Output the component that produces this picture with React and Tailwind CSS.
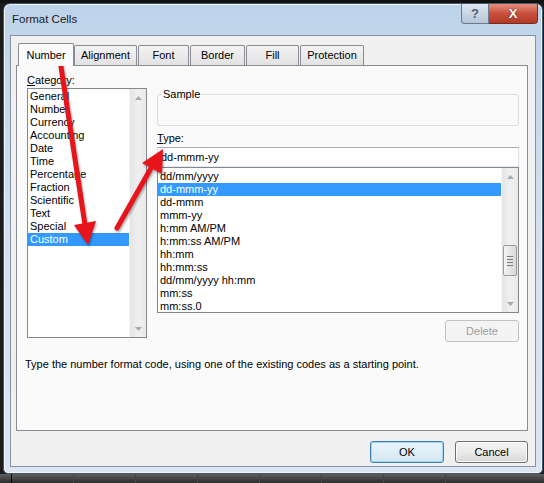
const categories = [
  "General",
  "Number",
  "Currency",
  "Accounting",
  "Date",
  "Time",
  "Percentage",
  "Fraction",
  "Scientific",
  "Text",
  "Special",
  "Custom",
];

const types = [
  "dd/mm/yyyy",
  "dd-mmm-yy",
  "dd-mmm",
  "mmm-yy",
  "h:mm AM/PM",
  "h:mm:ss AM/PM",
  "hh:mm",
  "hh:mm:ss",
  "dd/mm/yyyy hh:mm",
  "mm:ss",
  "mm:ss.0",
];

const tabs = [
  { label: "Alignment", w: "w-[63px]" },
  { label: "Font", w: "w-[51px]" },
  { label: "Border", w: "w-[55px]" },
  { label: "Fill", w: "w-[53px]" },
  { label: "Protection", w: "w-[64px]" },
];

function Arrow({ up }) {
  return (
    <svg width="7" height="4" viewBox="0 0 7 4">
      <path d={up ? "M0 4 L3.5 0 L7 4 Z" : "M0 0 L3.5 4 L7 0 Z"} fill="#a3abb5" />
    </svg>
  );
}

function ScrollBar({ thumb }) {
  return (
    <div className="w-[17px] h-full flex flex-col bg-gradient-to-r from-[#e4e4e4] via-[#f0f0f0] to-[#e9e9e9] border-l border-[#f6f6f6]">
      <div className="h-[17px] flex items-center justify-center">
        <Arrow up />
      </div>
      <div className="flex-1 flex flex-col">
        {thumb && (
          <>
            <div className="h-[60px]" />
            <div className="h-[31px] mx-[1px] rounded-[2px] border border-[#9b9b9b] bg-gradient-to-r from-[#f4f4f4] to-[#d9d9d9] flex flex-col items-center justify-center gap-[2px]">
              <div className="w-[6px] h-px bg-[#7a7a7a]" />
              <div className="w-[6px] h-px bg-[#7a7a7a]" />
              <div className="w-[6px] h-px bg-[#7a7a7a]" />
              <div className="w-[6px] h-px bg-[#7a7a7a]" />
            </div>
          </>
        )}
      </div>
      <div className="h-[17px] flex items-center justify-center">
        <Arrow />
      </div>
    </div>
  );
}

function Button({ children, primary, disabled, w }) {
  return (
    <div
      className={`${w} h-[22px] rounded-[3px] border flex items-center justify-center ${
        disabled
          ? "border-[#c2c2c2] bg-[#f4f4f4] text-[#9d9d9d]"
          : primary
          ? "border-[#3c7fb1] bg-gradient-to-b from-[#eaf6fd] to-[#d4e6f3] text-black shadow-[inset_0_0_0_1px_#9fd5f5]"
          : "border-[#707070] bg-gradient-to-b from-[#f2f2f2] via-[#ebebeb] to-[#d6d6d6] text-black shadow-[inset_0_0_0_1px_#fcfcfc]"
      }`}
    >
      {children}
    </div>
  );
}

export default function App() {
  return (
    <div
      className="w-[544px] h-[483px] bg-[#1c1c1c] relative overflow-hidden flex flex-col text-[11px] text-black"
      style={{ fontFamily: '"Liberation Sans", Arial, sans-serif' }}
    >
      <div className="h-[3px] bg-[#111]" />

      {/* WINDOW */}
      <div className="ml-[3px] w-[540px] h-[471px] rounded-t-[7px] rounded-b-[5px] border border-[#46566b] bg-gradient-to-b from-[#bed3ea] via-[#d3e1f0] to-[#dbe6f2] shadow-[inset_0_0_0_1px_#eef4fa] flex flex-col">
        {/* TITLE */}
        <div className="h-[31px] flex items-start">
          <div className="pl-[8px] h-[31px] flex items-center text-[11.5px] text-[#1b1b1b]">
            Format Cells
          </div>
          <div className="ml-auto mr-[4px] flex">
            <div className="w-[28px] h-[20px] rounded-bl-[4px] border border-[#6c7b8f] border-t-0 bg-gradient-to-b from-[#dfe7f1] to-[#b5c5d8] flex items-center justify-center text-[13px] font-bold text-[#4d5d72]">
              ?
            </div>
            <div className="w-[49px] h-[20px] rounded-br-[4px] border border-[#7a2a22] border-t-0 border-l-0 bg-gradient-to-b from-[#e3907f] via-[#c8503d] to-[#b13a26] flex items-center justify-center text-[13px] font-bold text-white [text-shadow:0_0_2px_#5a1a10]">
              X
            </div>
          </div>
        </div>

        {/* CLIENT */}
        <div className="ml-[6px] w-[526px] h-[432px] border border-[#8493a6] bg-[#f0f0f0] flex flex-col">
          <div className="pt-[7px] ml-[5px] w-[512px]">
            {/* TABS */}
            <div className="h-[22px] flex items-end pl-[2px]">
              <div className="relative z-10 w-[56px] h-[23px] -mb-px border border-b-0 border-[#898c95] rounded-t-[2px] bg-[#fafafa] flex items-center justify-center">
                Number
              </div>
              {tabs.map((t, i) => (
                <div
                  key={t.label}
                  className={`${t.w} ${i > 0 ? "ml-px" : ""} h-[20px] border border-b-0 border-[#898c95] rounded-t-[2px] bg-gradient-to-b from-[#f3f3f3] to-[#e2e2e2] flex items-center justify-center`}
                >
                  {t.label}
                </div>
              ))}
            </div>

            {/* PANEL */}
            <div className="w-[512px] h-[366px] border border-[#898c95] bg-[#fafafa]">
              <div className="flex pl-[10px] pt-[6px]">
                {/* Category */}
                <div className="w-[120px]">
                  <div className="h-[16px] leading-[16px]">
                    <span className="underline">C</span>ategory:
                  </div>
                  <div className="h-[250px] border border-[#828790] bg-white flex">
                    <div className="flex-1 pt-px">
                      {categories.map((c) => (
                        <div
                          key={c}
                          className={`h-[13px] leading-[13px] pl-[2px] ${
                            c === "Custom" ? "bg-[#3399ff] text-white" : ""
                          }`}
                        >
                          {c}
                        </div>
                      ))}
                    </div>
                    <ScrollBar />
                  </div>
                </div>

                {/* Right side */}
                <div className="ml-[10px] w-[362px] pt-[16px] flex flex-col">
                  <fieldset className="h-[38px] border border-[#d5dfe5] rounded-[3px]">
                    <legend className="ml-[4px] px-px leading-[13px]">Sample</legend>
                  </fieldset>
                  <div className="mt-[6px] leading-[13px]">
                    <span className="underline">T</span>ype:
                  </div>
                  <div className="mt-[2px] h-[20px] border border-[#abadb3] border-l-[#dbdfe6] border-r-[#dbdfe6] border-b-[#e3e9ef] bg-white pl-[3px] flex items-center">
                    dd-mmm-yy
                  </div>
                  <div className="h-[146px] border border-[#828790] bg-white flex">
                    <div className="flex-1 pt-[2px]">
                      {types.map((t) => (
                        <div
                          key={t}
                          className={`h-[13px] leading-[13px] pl-[2px] ${
                            t === "dd-mmm-yy" ? "bg-[#3399ff] text-white" : ""
                          }`}
                        >
                          {t}
                        </div>
                      ))}
                    </div>
                    <ScrollBar thumb />
                  </div>
                  <div className="mt-[7px] self-end">
                    <Button disabled w="w-[74px]">
                      Delete
                    </Button>
                  </div>
                </div>
              </div>

              <div className="mt-[15px] pl-[8px] leading-[14px]">
                Type the number format code, using one of the existing codes as a starting point.
              </div>
            </div>

            {/* OK / Cancel */}
            <div className="mt-[10px] flex justify-end gap-[11px]">
              <Button primary w="w-[74px]">
                OK
              </Button>
              <Button w="w-[73px]">Cancel</Button>
            </div>
          </div>
        </div>
      </div>

      {/* spreadsheet behind */}
      <div className="flex-1 flex bg-gradient-to-b from-[#5e5e5e] to-[#2e2e2e]">
        <div className="w-[12px] border-r border-black" />
        <div className="w-[62px] border-r border-[#444]" />
        <div className="w-[62px] border-r border-[#444]" />
        <div className="w-[62px] border-r border-[#444]" />
        <div className="w-[62px] border-r border-[#444]" />
        <div className="w-[62px] border-r border-[#444]" />
        <div className="w-[62px] border-r border-[#444]" />
        <div className="w-[62px] border-r border-[#444]" />
      </div>

      {/* red arrows overlay */}
      <svg
        className="absolute left-0 top-0 pointer-events-none drop-shadow-[1px_2px_1px_rgba(0,0,0,0.35)]"
        width="544"
        height="483"
        viewBox="0 0 544 483"
      >
        <line x1="60" y1="60" x2="85" y2="225" stroke="#e8141c" strokeWidth="5" strokeLinecap="round" />
        <polygon points="96,221 74,225 88,245" fill="#e8141c" />
        <line x1="117" y1="228" x2="151" y2="168" stroke="#e8141c" strokeWidth="5" strokeLinecap="round" />
        <polygon points="162,174 142,163 163,149" fill="#e8141c" />
      </svg>
    </div>
  );
}
